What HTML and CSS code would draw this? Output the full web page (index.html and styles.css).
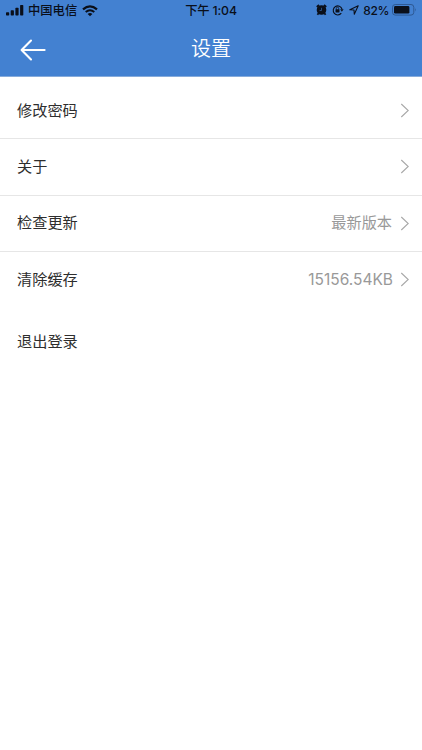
FILE: index.html
```html
<!DOCTYPE html>
<html lang="zh-CN">
<head>
    <meta charset="UTF-8">
    <meta name="viewport" content="width=device-width, initial-scale=1.0">
    <title>设置</title>
    <link rel="stylesheet" href="styles.css">
</head>
<body>
    <header class="header">
        <!-- 状态栏 -->
        <div class="status-bar">
            <div class="status-left">
                <svg class="signal" width="18" height="11" viewBox="0 0 18 11">
                    <rect x="0" y="7.2" width="3.2" height="3.3" rx="0.7"/>
                    <rect x="4.7" y="5.2" width="3.2" height="5.3" rx="0.7"/>
                    <rect x="9.4" y="2.7" width="3.2" height="7.8" rx="0.7"/>
                    <rect x="14.1" y="0" width="3.2" height="10.5" rx="0.7"/>
                </svg>
                <span class="carrier">中国电信</span>
                <svg class="wifi" width="16" height="12" viewBox="0 0 16 12">
                    <path d="M1 4.4 Q8 -1.7 15 4.4" fill="none" stroke="#0a0f1a" stroke-width="2.2"/>
                    <path d="M3.7 7 Q8 3.4 12.3 7" fill="none" stroke="#0a0f1a" stroke-width="2"/>
                    <path d="M5.6 8.9 Q8 6.9 10.4 8.9 L8 11.3 Z"/>
                </svg>
            </div>
            <div class="status-time">下午 1:04</div>
            <div class="status-right">
                <svg class="alarm" width="11" height="12" viewBox="0 0 11 12">
                    <circle cx="5.5" cy="6" r="4.8"/>
                    <path d="M0.8 3 L3 1 M8 1 L10.2 3 M2.6 9.3 L1.4 10.8 M8.4 9.3 L9.6 10.8" fill="none" stroke="#0a0f1a" stroke-width="1.8"/>
                    <path d="M5.5 3.8 V6.5 H3.6" fill="none" stroke="#3766a6" stroke-width="0.7"/>
                </svg>
                <svg class="lock" width="12" height="12" viewBox="0 0 12 12">
                    <path d="M9.3 9.2 A4.5 4.5 0 1 1 10 5" fill="none" stroke="#0a0f1a" stroke-width="1.1"/>
                    <path d="M8.2 5.2 H11.6 L9.9 7.8 Z"/>
                    <rect x="3.5" y="5.3" width="4" height="3.1" rx="0.4"/>
                    <path d="M4.3 5.6 V4.4 A1.2 1.2 0 0 1 6.7 4.4 V5.6" fill="none" stroke="#0a0f1a" stroke-width="0.8"/>
                </svg>
                <svg class="location" width="10" height="10" viewBox="0 0 10 10">
                    <path d="M0.8 4.7 L9.2 0.8 L5.3 9.2 L5 5 Z" fill="none" stroke="#0a0f1a" stroke-width="1.1" stroke-linejoin="round"/>
                </svg>
                <span class="percent">82%</span>
                <svg class="battery" width="26" height="12" viewBox="0 0 26 12">
                    <rect x="0.5" y="0.5" width="21.3" height="10.6" rx="2.8" fill="none" stroke="#2b558c" stroke-width="0.9"/>
                    <rect x="2" y="2" width="15.4" height="7.6" rx="1.4"/>
                    <path d="M23.2 4 Q24.6 5.8 23.2 7.6 Z" fill="#2b558c"/>
                </svg>
            </div>
        </div>
        <div class="nav-bar">
            <svg class="back" width="26" height="22" viewBox="0 0 26 22">
                <path d="M11 1.6 L1.6 11 L11 20.4 M1.8 11 H24.6" fill="none" stroke="#fff" stroke-width="2.1" stroke-linecap="round" stroke-linejoin="round"/>
            </svg>
            <h1 class="title">设置</h1>
        </div>
    </header>

    <!-- 设置列表 -->
    <ul class="list">
        <li class="item">
            <span class="label">修改密码</span>
            <svg class="arrow" width="10" height="15" viewBox="0 0 10 15"><path d="M1.3 1 L8.2 7.5 L1.3 14"/></svg>
        </li>
        <li class="item">
            <span class="label">关于</span>
            <svg class="arrow" width="10" height="15" viewBox="0 0 10 15"><path d="M1.3 1 L8.2 7.5 L1.3 14"/></svg>
        </li>
        <li class="item">
            <span class="label">检查更新</span>
            <span class="value">最新版本</span>
            <svg class="arrow" width="10" height="15" viewBox="0 0 10 15"><path d="M1.3 1 L8.2 7.5 L1.3 14"/></svg>
        </li>
        <li class="item">
            <span class="label">清除缓存</span>
            <span class="value size">15156.54KB</span>
            <svg class="arrow" width="10" height="15" viewBox="0 0 10 15"><path d="M1.3 1 L8.2 7.5 L1.3 14"/></svg>
        </li>
    </ul>
    <div class="item logout">
        <span class="label">退出登录</span>
    </div>
</body>
</html>
```

FILE: styles.css
```css
* {
    box-sizing: border-box;
}
body {
    margin: 0;
    min-height: 750px;
    background: #fff;
    color: #2e2e2e;
    font-family: "Liberation Sans", "Noto Sans CJK SC", sans-serif;
}
svg {
    display: block;
    flex: none;
    fill: #0a0f1a;
}
.header {
    height: 77px;
    background: #4381d1;
    border-bottom: 1px solid #86abdb;
}
.status-bar {
    display: grid;
    grid-template-columns: 1fr auto 1fr;
    align-items: center;
    height: 20px;
    padding: 1px 4px 0 6px;
    color: #0a0f1a;
    font-family: Inter, "Noto Sans CJK SC", sans-serif;
    font-size: 12.3px;
    font-weight: 500;
    line-height: 19px;
    white-space: nowrap;
}
.status-left,
.status-right {
    display: flex;
    align-items: center;
}
.status-right {
    justify-content: flex-end;
}
.status-right svg {
    margin-top: -1px;
}
.signal {
    margin-top: -1px;
}
.carrier {
    margin: 0 5px 0 4px;
}
.status-time {
    padding-right: 2px;
    letter-spacing: -0.15px;
}
.lock {
    margin-left: 5px;
}
.location {
    margin-left: 5px;
}
.percent {
    margin: 0 3px 0 4px;
    font-size: 12px;
    letter-spacing: -0.4px;
}
.nav-bar {
    display: grid;
    grid-template-columns: 1fr auto 1fr;
    align-items: center;
    height: 56px;
    padding: 0 20px;
}
.back {
    margin-top: 4px;
}
.title {
    margin: 0;
    padding-top: 2px;
    color: #fff;
    font-size: 20px;
    font-weight: 350;
    line-height: 54px;
}
.list {
    margin: 0;
    padding: 6px 0 0;
    list-style: none;
}
.item {
    display: flex;
    align-items: center;
    height: 56.3px;
    padding: 0 12px 0 17px;
    border-bottom: 1px solid #e6e6e6;
    font-size: 15.2px;
    line-height: 24px;
}
.item:last-child {
    border-bottom-color: transparent;
}
.label {
    flex: 1;
}
.value {
    margin-right: 8px;
    color: #999;
}
.size {
    margin-right: 7px;
    font-family: Inter, sans-serif;
    font-size: 15.5px;
}
.arrow {
    fill: none;
    stroke: #a8a8a8;
    stroke-width: 1.1;
}
.logout {
    margin-top: 6px;
}
```
